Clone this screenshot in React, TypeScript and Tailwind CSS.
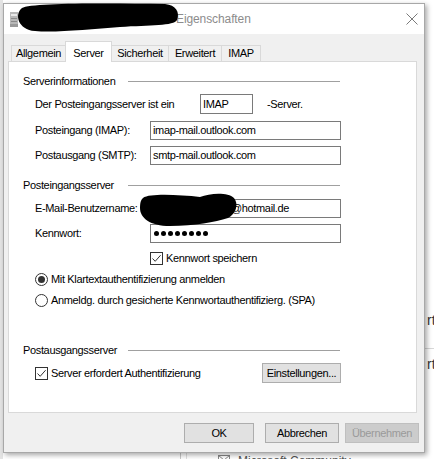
import React from 'react';

const font = "font-['Liberation_Sans',Arial,sans-serif]";

function Header({ label, className }: { label: string; className?: string }) {
    return (
        <div className={`flex items-center h-[20px] pl-[14px] ${className ?? ''}`}>
            <div className="w-[105px] whitespace-nowrap">{label}</div>
            <div className="h-px w-[212px] bg-[#a0a0a0]" />
        </div>
    );
}

function Field({ label, value, className }: { label: string; value: React.ReactNode; className?: string }) {
    return (
        <div className={`flex items-center pl-[26px] ${className ?? ''}`}>
            <div className="w-[115px] whitespace-nowrap">{label}</div>
            <div className="w-[191px] h-[19px] border border-[#7a7a7a] bg-white px-[2px] flex items-center whitespace-nowrap">
                {value}
            </div>
        </div>
    );
}

function CheckBox() {
    return (
        <div className="w-[13px] h-[13px] border border-[#333] bg-white flex items-center justify-center shrink-0">
            <svg width="11" height="11" viewBox="0 0 11 11">
                <path d="M1.5 5.5 L4.2 8.3 L9.6 2.2" fill="none" stroke="#333" strokeWidth="1" />
            </svg>
        </div>
    );
}

function Radio({ checked }: { checked?: boolean }) {
    return (
        <div className="w-[13px] h-[13px] rounded-full border border-[#333] bg-white flex items-center justify-center shrink-0">
            {checked && <div className="w-[7px] h-[7px] rounded-full bg-[#333]" />}
        </div>
    );
}

export default function App() {
    const tabs = [
        { name: 'Allgemein', w: 'w-[55px]' },
        { name: 'Server', w: 'w-[47px]', active: true },
        { name: 'Sicherheit', w: 'w-[58px]' },
        { name: 'Erweitert', w: 'w-[54px]' },
        { name: 'IMAP', w: 'w-[40px]' },
    ];

    return (
        <div className={`relative w-[434px] h-[459px] overflow-hidden bg-white text-[11px] tracking-[-0.35px] text-black ${font}`}>
            {/* desktop behind the dialog */}
            <div className="absolute left-0 top-0 w-[3px] h-[459px] bg-[#e4e4e4]" />
            <div className="absolute left-[427px] top-[310px] text-[14px] tracking-normal text-[#333]">rt</div>
            <div className="absolute left-[425px] top-[348px] w-[9px] h-px bg-[#d8d8d8]" />
            <div className="absolute left-[427px] top-[354px] text-[14px] tracking-normal text-[#333]">rt</div>
            <div className="absolute left-[180px] top-[450px] w-px h-[9px] bg-[#c8c8c8]" />
            <div className="absolute left-[186px] top-[450px] w-px h-[9px] bg-[#e0e0e0]" />
            <div className="absolute left-[218px] top-[452px] flex items-start gap-[8px] text-[12px] tracking-normal text-[#555]">
                <svg width="12" height="10" viewBox="0 0 12 10" className="mt-[3px]">
                    <rect x="0.5" y="0.5" width="11" height="9" fill="none" stroke="#888" />
                    <path d="M0.5 0.5 L6 5 L11.5 0.5" fill="none" stroke="#888" />
                </svg>
                <span>Microsoft Community</span>
            </div>

            {/* dialog window */}
            <div className="absolute left-[3px] top-[3px] w-[422px] h-[450px] border border-[#a8a8a8] bg-[#f0f0f0] shadow-[2px_2px_5px_rgba(0,0,0,0.35)] flex flex-col">
                <div className="h-[30px] bg-white flex items-center shrink-0">
                    <svg width="8" height="15" viewBox="0 0 8 15" className="ml-[6px]">
                        <rect x="0" y="0" width="8" height="15" fill="#b8b8b8" />
                        <rect x="1" y="2" width="6" height="2" fill="#e8e8e8" />
                        <rect x="1" y="6" width="6" height="1" fill="#8a8a8a" />
                        <rect x="1" y="9" width="6" height="1" fill="#8a8a8a" />
                        <rect x="0" y="12" width="8" height="3" fill="#9a9a9a" />
                    </svg>
                    <span className="ml-[158px] text-[12px] tracking-[-0.1px] text-[#8c8c8c]">Eigenschaften</span>
                    <svg width="12" height="12" viewBox="0 0 12 12" className="ml-auto mr-[6px]">
                        <path d="M0.5 0.5 L11.5 11.5 M11.5 0.5 L0.5 11.5" stroke="#7a7a7a" strokeWidth="1" />
                    </svg>
                </div>

                <div className="pl-[4px] pr-[7px]">
                    <div className="flex items-end h-[20px] mt-[7px] pl-[3px]">
                        {tabs.map((t, i) =>
                            t.active ? (
                                <div
                                    key={t.name}
                                    className={`${t.w} h-[21px] -mb-px -ml-px relative z-10 bg-white border-t border-l border-r border-[#d9d9d9] flex items-start justify-center pt-[3px]`}
                                >
                                    {t.name}
                                </div>
                            ) : (
                                <div
                                    key={t.name}
                                    className={`${t.w} h-[16px] ${i > 0 ? '-ml-px' : ''} bg-[#f0f0f0] border-t border-l border-r border-[#d9d9d9] flex items-center justify-center`}
                                >
                                    {t.name}
                                </div>
                            )
                        )}
                    </div>

                    <div className="h-[352px] border border-[#d9d9d9] bg-white">
                        <Header label="Serverinformationen" className="mt-[9px]" />

                        <div className="flex items-center pl-[26px] mt-[3px] h-[20px]">
                            <div className="w-[165px] whitespace-nowrap">Der Posteingangsserver ist ein</div>
                            <div className="w-[53px] h-[20px] border border-[#7a7a7a] bg-white px-[2px] flex items-center">IMAP</div>
                            <div className="ml-[14px]">-Server.</div>
                        </div>

                        <Field label="Posteingang (IMAP):" value="imap-mail.outlook.com" className="mt-[7px]" />
                        <Field label="Postausgang (SMTP):" value="smtp-mail.outlook.com" className="mt-[6px]" />

                        <Header label="Posteingangsserver" className="mt-[10px]" />

                        <Field
                            label="E-Mail-Benutzername:"
                            value={
                                <>
                                    <span className="inline-block w-[78px]" />
                                    <span>@hotmail.de</span>
                                </>
                            }
                            className="mt-[4px]"
                        />
                        <Field
                            label="Kennwort:"
                            value={
                                <div className="flex gap-[2px] pl-[1px]">
                                    {Array.from({ length: 8 }).map((_, i) => (
                                        <div key={i} className="w-[5px] h-[5px] rounded-full bg-black" />
                                    ))}
                                </div>
                            }
                            className="mt-[6px]"
                        />

                        <div className="flex items-center h-[14px] pl-[141px] mt-[8px]">
                            <CheckBox />
                            <span className="ml-[3px] whitespace-nowrap">Kennwort speichern</span>
                        </div>

                        <div className="flex items-center h-[14px] pl-[26px] mt-[7px]">
                            <Radio checked />
                            <span className="ml-[3px] whitespace-nowrap">Mit Klartextauthentifizierung anmelden</span>
                        </div>
                        <div className="flex items-center h-[14px] pl-[26px] mt-[7px]">
                            <Radio />
                            <span className="ml-[3px] whitespace-nowrap">Anmeldg. durch gesicherte Kennwortauthentifizierg. (SPA)</span>
                        </div>

                        <Header label="Postausgangsserver" className="mt-[33px]" />

                        <div className="flex items-center h-[20px] pl-[26px] mt-[3px]">
                            <div className="w-[227px] flex items-center">
                                <CheckBox />
                                <span className="ml-[3px] whitespace-nowrap">Server erfordert Authentifizierung</span>
                            </div>
                            <button className="w-[79px] h-[20px] bg-[#e1e1e1] border border-[#adadad] flex items-center justify-center">
                                Einstellungen...
                            </button>
                        </div>
                    </div>

                    <div className="flex justify-end mt-[10px] -mr-[2px]">
                        <button className="w-[70px] h-[20px] bg-[#e1e1e1] border border-[#adadad] flex items-center justify-center">OK</button>
                        <button className="w-[74px] h-[20px] ml-[11px] bg-[#e1e1e1] border border-[#adadad] flex items-center justify-center">Abbrechen</button>
                        <button className="w-[74px] h-[20px] ml-[6px] bg-[#cccccc] border border-[#bfbfbf] text-[#9a9a9a] flex items-center justify-center">Übernehmen</button>
                    </div>
                </div>
            </div>

            {/* redaction marks */}
            <svg className="absolute left-0 top-0 pointer-events-none" width="434" height="459" viewBox="0 0 434 459">
                <path d="M22 8 C30 3 100 3 165 4 C176 5 180 12 177 20 C174 26 150 25 120 27 C90 29 55 33 35 31 C18 30 14 14 22 8 Z" fill="#000" />
                <path d="M143 198 C150 193 180 195 200 197 C210 193 228 192 234 198 C239 204 236 214 228 218 C215 222 195 226 170 226 C150 226 140 218 140 208 C140 202 141 200 143 198 Z" fill="#000" />
            </svg>
        </div>
    );
}
